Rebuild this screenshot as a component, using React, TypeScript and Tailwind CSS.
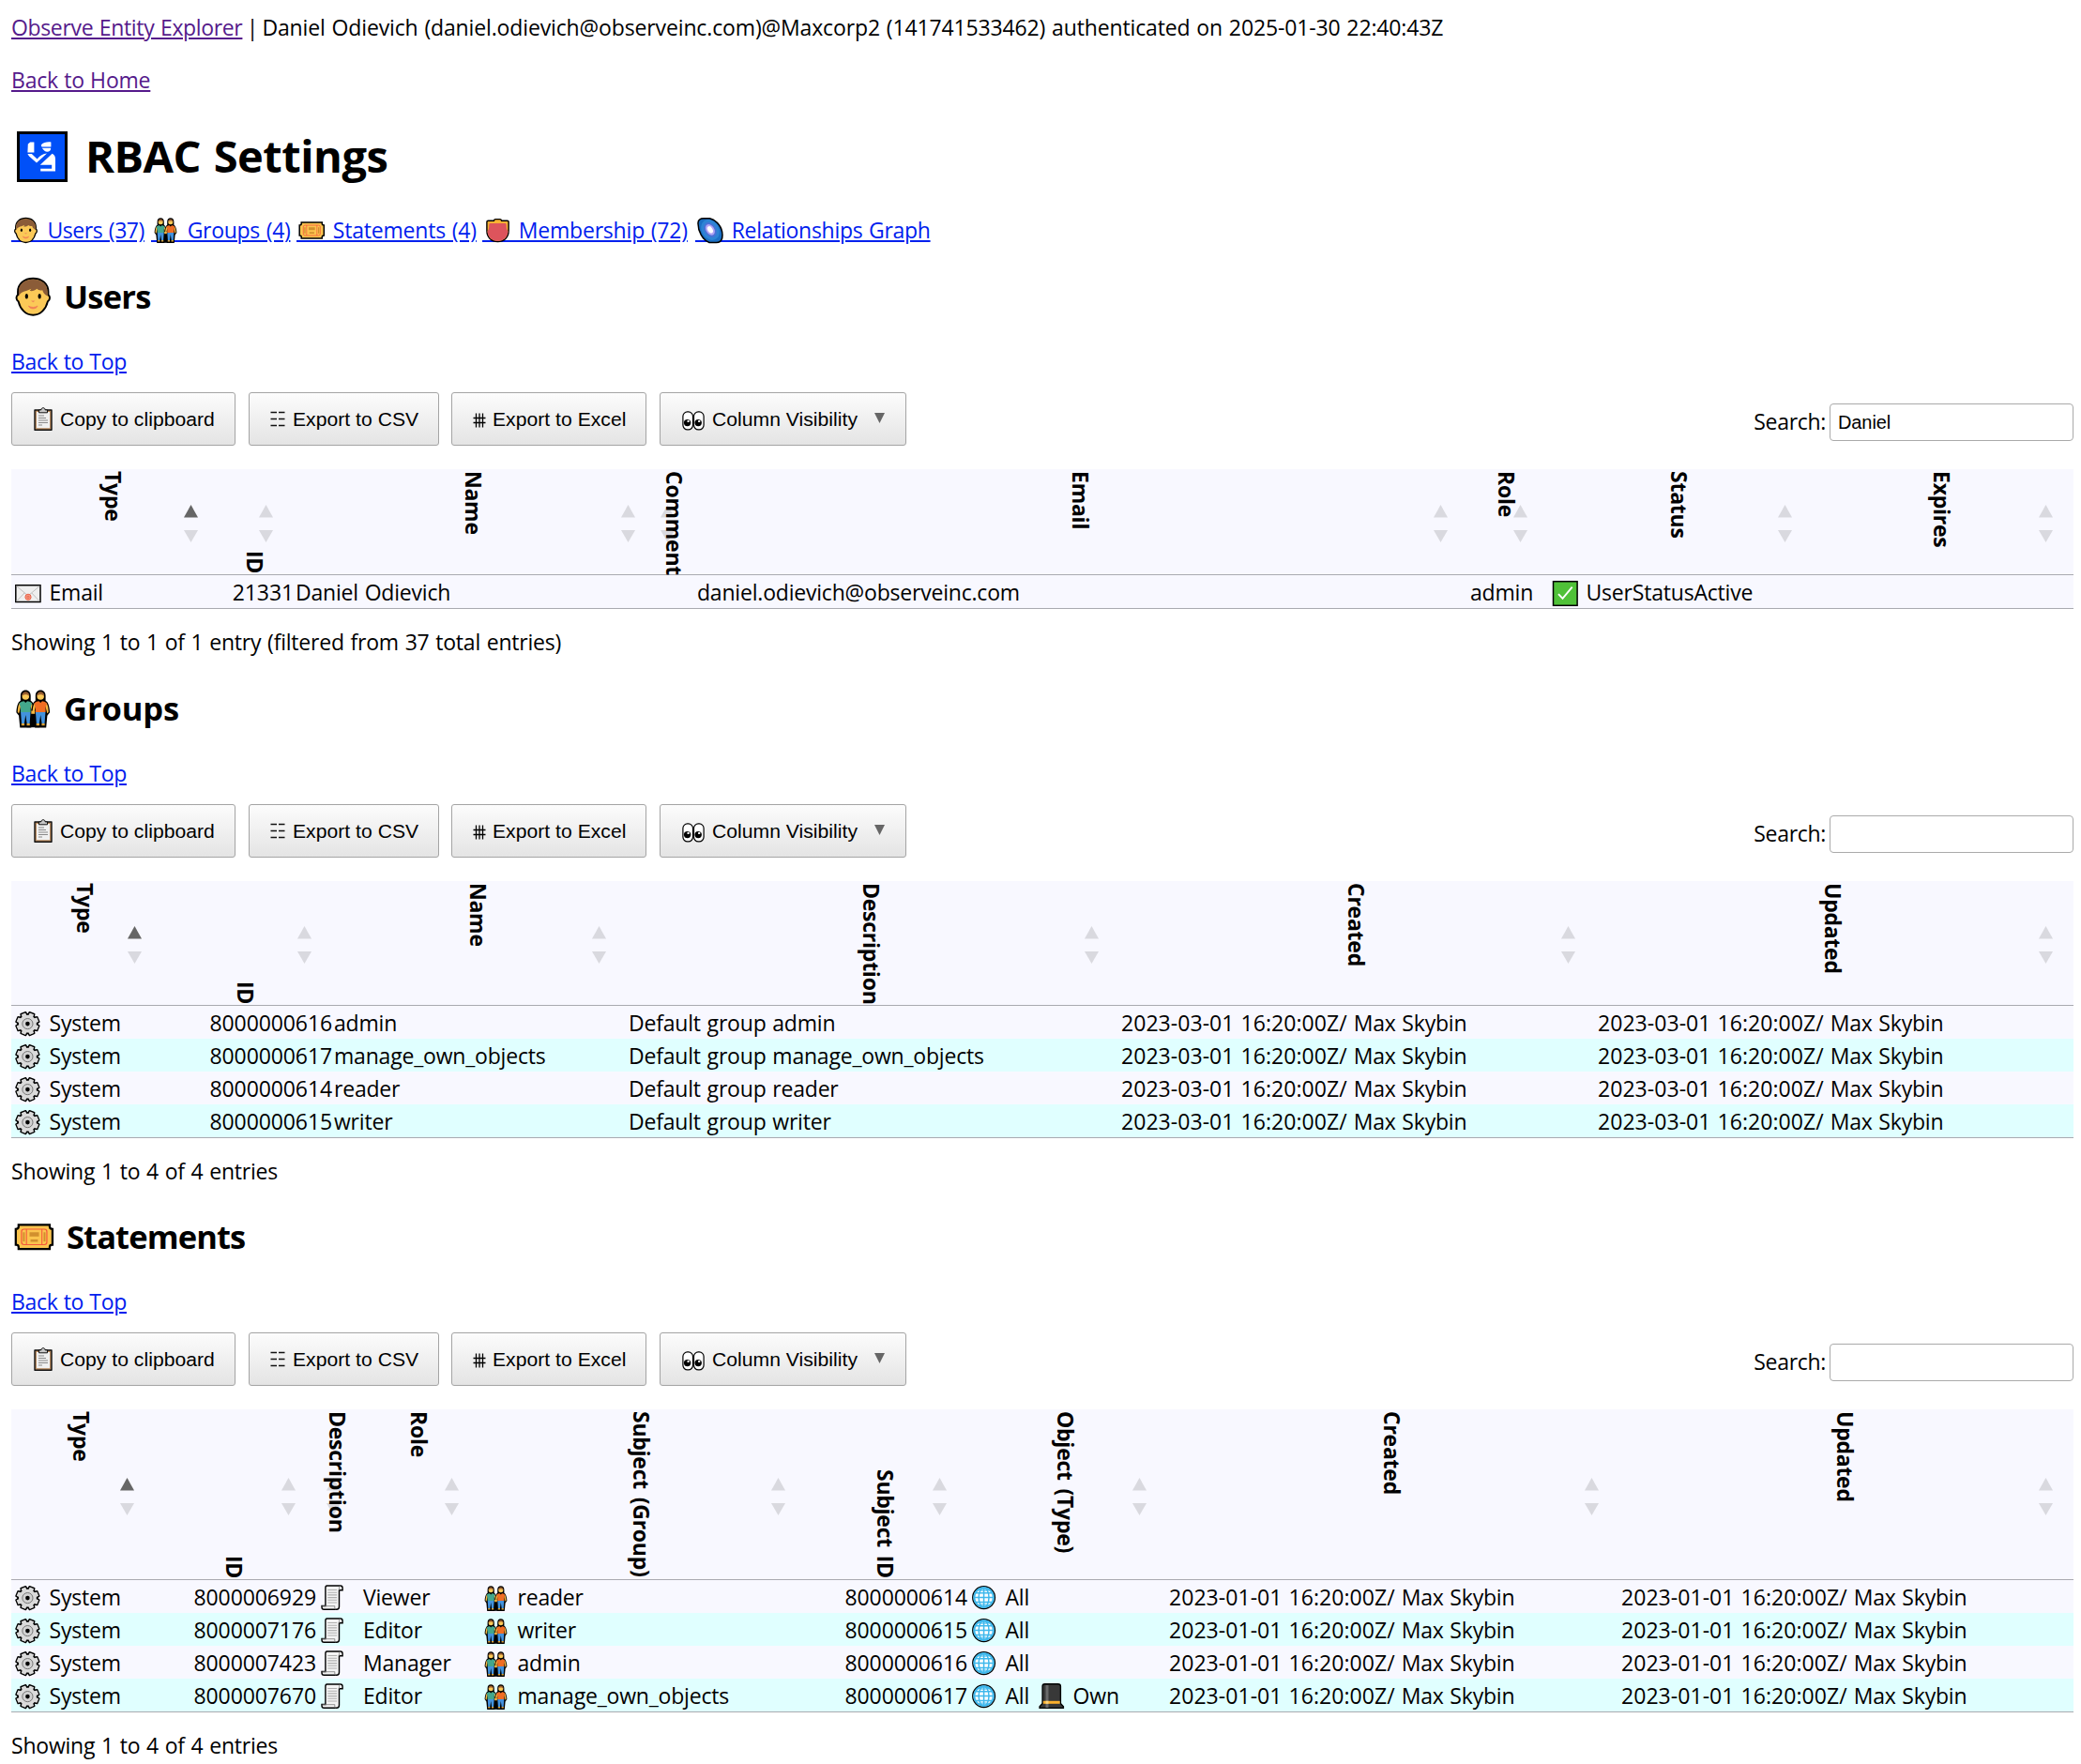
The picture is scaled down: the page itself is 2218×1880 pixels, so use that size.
import React from 'react';

type IconProps = { className?: string };

const CheckpointIcon = ({ className }: IconProps) => (
  <svg viewBox="0 0 32 32" className={className}>
    <rect x="3" y="4" width="27" height="27" fill="#000" />
    <rect x="4.5" y="5.5" width="24" height="24" fill="#0050f8" />
    <path d="M8.900 10.700l1.200-.9h2.100v5.400H8.700zM15.900 11.200c1-1.200 3.800-1.900 5.300-1.400v2.400h-5zM16.400 12.900h4.700c0 1.200-.7 2-2 2-1 0-1.700-.6-2.700-2z" fill="#fff" />
    <path d="M8.700 16h2.200l2.900 2.800c1.500-1.900 3.200-2.900 5.200-3l-5.500 5-4-3.500zM21.800 15.900c1.200.7 1.700 1.500 1.700 2.800v6.600h-7.900v-1.400h6v-2h-6.200z" fill="#fff" />
  </svg>
);

const PersonIcon = ({ className }: IconProps) => (
  <svg viewBox="0 0 32 32" className={className}>
    <path d="M15.5 4.5c6.500 0 10.800 4 10.800 9.500v2.200c1.300.5 1.600 3.600-.4 4.700-1.300 5.500-5.200 9.600-10.400 9.600S6.400 26.400 5.100 20.900c-2-1.100-1.700-4.200-.4-4.700V14c0-5.500 4.300-9.500 10.800-9.500z" fill="#fbc957" stroke="#000" strokeWidth="1.300" />
    <path d="M5.300 17v-3.200C5.300 8.600 9.400 5.200 15.500 5.200s10.200 3.400 10.200 8.600V17c-2-1-3.200-2.600-3.500-4.200-1.500.5-2.800.2-4-.9-1.400 1.300-3.100 1.800-5 1.500l1-1.600C11.500 13.500 7 13.300 5.300 17z" fill="#8b5c38" />
    <ellipse cx="10.900" cy="17.200" rx="1.100" ry="1.800" fill="#000" />
    <ellipse cx="20.100" cy="17.200" rx="1.100" ry="1.800" fill="#000" />
    <path d="M14 20.300h3l-1.500 1.200z" fill="#ee8a58" />
    <path d="M12.300 24c1.800 1.300 4.600 1.300 6.400 0-.7 2.600-5.700 2.600-6.400 0z" fill="#f07f55" stroke="#f07f55" strokeWidth=".5" />
  </svg>
);

const Figure = ({ x, shirt }: { x: number; shirt: string }) => (
  <g transform={`translate(${x} 0)`}>
    <path d="M0 4.300c-2.200 0-3.600 1.600-3.600 4v3.500c-1.800.9-2.800 4-3 8.300l1.800 2.400.8 8.500h8l.8-8.500 1.800-2.400c-.2-4.300-1.200-7.400-3-8.300V8.300c0-2.400-1.400-4-3.600-4z" fill="#000" />
    <path d="M-4.200 13.500c-1.100 1.500-1.400 4-1.500 6.500l1 .8 1.200-5zM4.200 13.500c1.100 1.500 1.400 4 1.500 6.500l-1 .8-1.200-5z" fill="#f5b740" />
    <circle cx="0" cy="8.700" r="2.500" fill="#fbc957" />
    <path d="M-2.600 8.800C-2.800 4.400 2.800 4.400 2.600 8.800c-1-1.700-4.200-1.700-5.200 0z" fill="#9a5f30" />
    <path d="M-4.500 13.600c1-1 2.500-1.300 3.300-1.400L0 13.400l1.200-1.200c.8.1 2.300.4 3.300 1.400l-.9 3V20h-7.200v-3.400z" fill={shirt} />
    <path d="M-3.500 20h7l-.6 8h-2L0 22l-.9 6h-2z" fill="#4292dd" />
    <path d="M-3 28h2.200v1.500H-3zM.8 28H3v1.500H.8z" fill="#dba33a" />
  </g>
);

const PeopleIcon = ({ className }: IconProps) => (
  <svg viewBox="0 0 32 32" className={className}>
    <path d="M11 18h9v12.800h-9z" fill="#000" />
    <Figure x={10.2} shirt="#43a78c" />
    <Figure x={20.8} shirt="#f06d23" />
    <path d="M14.200 19h2.600v2.200h-2.600z" fill="#f5b740" />
  </svg>
);

const TicketIcon = ({ className }: IconProps) => (
  <svg viewBox="0 0 32 32" className={className}>
    <path d="M5.200 8.900h22.100v1.500c0 .8.600 1.500 2 1.500v11.200c-1.400 0-2 .7-2 1.500v1.500H5.200v-1.500c0-.8-.6-1.500-2-1.500V11.900c1.400 0 2-.7 2-1.500z" fill="#fbc44e" stroke="#000" strokeWidth="1.500" />
    <rect x="7.300" y="12" width="18" height="11" rx="1.800" fill="none" stroke="#f4583c" strokeWidth=".8" />
    <path d="M10.800 12v11M21.800 12v11" stroke="#f4583c" strokeWidth=".7" />
    <rect x="8.300" y="14.200" width="1.300" height="6.600" fill="#d18f2e" />
    <rect x="23" y="14.200" width="1.300" height="6.600" fill="#d18f2e" />
    <rect x="13" y="14.200" width="6.700" height="3" fill="#d18f2e" />
    <rect x="13.700" y="19.300" width="5.200" height="1.700" fill="#d18f2e" />
  </svg>
);

const ShieldIcon = ({ className }: IconProps) => (
  <svg viewBox="0 0 32 32" className={className}>
    <path d="M6.200 7.300h6.200c.3-1.500 1-1.700 1.700-1.700h4.800c.7 0 1.400.2 1.700 1.700h6.200c.8 0 1.300.5 1.300 1.300v9.500c0 7-5.100 11.500-11.600 11.500S4.900 25.100 4.900 18.100V8.600c0-.8.500-1.300 1.300-1.300z" fill="#f9b233" stroke="#000" strokeWidth="1.400" />
    <path d="M5.500 18.500l1-1.400c.8-2 .8-4.200.8-5.400 0-1 .6-1.600 1.600-1.600h15.200c1 0 1.600.6 1.600 1.600 0 1.200 0 3.400.8 5.400l1 1.400c-.2 6.200-5 10.500-11 10.500S5.700 24.700 5.500 18.500z" fill="#dd545c" />
  </svg>
);

const GalaxyIcon = ({ className }: IconProps) => (
  <svg viewBox="0 0 32 32" className={className}>
    <path d="M3 9.500C3.200 6.500 5.500 4.700 9 4.700h6.500C23.500 7 29 14.500 29 22.500c0 5-2.500 8-6.500 8H15C8 28 2.700 18.500 3 9.500z" fill="#1b6fc4" stroke="#000" strokeWidth="1.500" />
    <ellipse cx="16" cy="17" rx="9" ry="11.500" transform="rotate(-32 16 17)" fill="#2e84d4" />
    <ellipse cx="16" cy="17" rx="6" ry="8.500" transform="rotate(-32 16 17)" fill="#4a72d6" />
    <ellipse cx="16" cy="16.800" rx="4.300" ry="6.400" transform="rotate(-32 16 17)" fill="#b2a4f4" />
    <ellipse cx="16" cy="16.800" rx="2.500" ry="4" transform="rotate(-32 16 17)" fill="#fff" />
  </svg>
);

const GlobeIcon = ({ className }: IconProps) => (
  <svg viewBox="0 0 32 32" className={className}>
    <circle cx="15.600" cy="16.600" r="11.800" fill="#fff" stroke="#000" strokeWidth="1.500" />
    <g fill="none" stroke="#3fb8ec" strokeWidth="1.500">
      <circle cx="15.600" cy="16.600" r="10.300" strokeWidth="2" />
      <ellipse cx="15.600" cy="16.600" rx="5.400" ry="10.500" />
      <path d="M15.600 6v21M5 16.600h21.200M7 11.800h17.200M7 21.400h17.200" />
    </g>
    <path d="M8.500 8.500c4-3.400 10.200-3.400 14.200 0-4 2-10.200 2-14.200 0zM8.500 24.700c4-2 10.200-2 14.200 0-4 3.400-10.200 3.400-14.200 0z" fill="#3fb8ec" fillOpacity=".6" />
  </svg>
);

const HatIcon = ({ className }: IconProps) => (
  <svg viewBox="0 0 32 32" className={className}>
    <path d="M8.500 3.700h14.200c1.500 0 2.700 1 2.700 2.600v18.200l3 3.200v1.700H3.100v-1.700l3-3.200V6.300c0-1.600 1-2.600 2.400-2.600z" fill="#383838" stroke="#000" strokeWidth="1.400" />
    <path d="M9.500 5h3v24h-3z" fill="#6a6a6a" />
    <path d="M6.800 21.800h17.900v3H6.800z" fill="#fbb02d" />
    <path d="M9.500 21.800h3v3h-3z" fill="#fdd27a" />
  </svg>
);

const MailIcon = ({ className }: IconProps) => (
  <svg viewBox="0 0 32 32" className={className}>
    <rect x="2.800" y="8.700" width="26.200" height="17.800" fill="#efefef" stroke="#000" strokeWidth="1.500" />
    <path d="M3.500 9.500L16 20 28.300 9.500M3.500 26l8.500-9M28.300 26l-8.500-9" fill="none" stroke="#b9b9b9" strokeWidth=".9" />
    <circle cx="16" cy="21.300" r="3.100" fill="#f6a08c" stroke="#e8573a" strokeWidth=".9" />
    <circle cx="16" cy="21.300" r="1.200" fill="none" stroke="#e8573a" strokeWidth=".8" />
  </svg>
);

const CheckIcon = ({ className }: IconProps) => (
  <svg viewBox="0 0 32 32" className={className}>
    <rect x="3.500" y="4.700" width="25.600" height="25.600" fill="#4fc138" stroke="#000" strokeWidth="1.500" />
    <path d="M9 18.200l4.500 4.700L23.700 10.700" fill="none" stroke="#fff" strokeWidth="1.900" />
  </svg>
);

const ScrollIcon = ({ className }: IconProps) => (
  <svg viewBox="0 0 32 32" className={className}>
    <path d="M9.500 4h14.300c1.600 0 2.300 1 2.300 2.500v2.300h-3.600v17.400c0 2-1 3.100-2.700 3.100H6.300c-1.500 0-2.300-.9-2.300-2.200v-1.600h3.900V6.200C7.900 4.900 8.400 4 9.500 4z" fill="#f3f3f3" stroke="#000" strokeWidth="1.400" />
    <path d="M22.500 9V6.300c0-1.200.5-2 1.500-2M4.500 25.700h13.300v2.400c0 .6.600 1 1.300 1" fill="none" stroke="#777" strokeWidth=".8" />
    <path d="M10.300 8.500h9.800M10.300 11.200h9.800M10.300 13.900h9.800M10.300 16.600h9.800M10.300 19.300h9.800M10.300 22h9.800" stroke="#b0b0b0" strokeWidth="1.100" />
  </svg>
);

const teeth = [0, 45, 90, 135, 180, 225, 270, 315];

const GearIcon = ({ className }: IconProps) => (
  <svg viewBox="0 0 32 32" className={className}>
    <g transform="translate(15.400 17.100)">
      {teeth.map((a) => (
        <path key={a} transform={`rotate(${a + 22.5})`} d="M-3.300-9l.5-3.200h5.600l.5 3.200z" fill="#d6d6d6" stroke="#000" strokeWidth="1.700" strokeLinejoin="round" />
      ))}
      <circle r="10.300" fill="#dadada" stroke="#000" strokeWidth="1.700" />
      {teeth.map((a) => (
        <path key={a} transform={`rotate(${a + 22.5})`} d="M-2.700-8l.4-3.700h4.600l.4 3.700z" fill="#dadada" />
      ))}
      <circle r="5.600" fill="#d2d2d2" stroke="#777" strokeWidth="1" />
      <circle r="2.300" fill="#000" />
    </g>
  </svg>
);

const ClipboardIcon = () => (
  <svg viewBox="0 0 20 25" className="h-[25px] w-5 shrink-0">
    <path d="M1 3h18v21.200H1z" fill="#b98d63" stroke="#111" strokeWidth="1.400" strokeLinejoin="round" />
    <path d="M3 5h14v17.200H3z" fill="#f0f0f0" />
    <path d="M5.500 5.800V2.900h2.300C8 1.200 9 .7 10 .7s2 .5 2.200 2.200h2.300v2.900z" fill="#c9c9c9" stroke="#111" strokeWidth="1" />
    <path d="M5 9h6M5 11.500h8M5 14h10M5 16.500h10M5 19h4" stroke="#8a8a8a" strokeWidth="1" />
  </svg>
);

const TrigramIcon = () => (
  <svg viewBox="0 0 16 17" className="h-[17px] w-4 shrink-0">
    <path d="M.5 1.500H7M9 1.500h6.500M.5 8.500H7M9 8.500h6.500M.5 15.500H7M9 15.500h6.500" stroke="#111" strokeWidth="1.500" />
  </svg>
);

const GridHashIcon = () => (
  <svg viewBox="0 0 14 16" className="mt-[3px] h-4 w-3.5 shrink-0">
    <path d="M3.500.5v15M7 .5v15M10.500.5v15M.5 5.500h13M.5 10.500h13" stroke="#000" strokeWidth="1.300" />
  </svg>
);

const EyesIcon = () => (
  <svg viewBox="0 0 24 21" className="mt-[3px] h-[21px] w-6 shrink-0">
    <rect x=".9" y=".9" width="10.600" height="19" rx="4.800" fill="#fff" stroke="#000" strokeWidth="1.200" />
    <rect x="12.500" y=".9" width="10.600" height="19" rx="4.800" fill="#fff" stroke="#000" strokeWidth="1.200" />
    <circle cx="5.600" cy="12.600" r="3.700" fill="#000" />
    <circle cx="17.200" cy="12.600" r="3.700" fill="#000" />
    <circle cx="6.600" cy="10.900" r="1.200" fill="#fff" />
    <circle cx="18.200" cy="10.900" r="1.200" fill="#fff" />
  </svg>
);

type Icon = (p: IconProps) => React.ReactElement;

const NavLink = ({ icon: I, label, width }: { icon: Icon; label: string; width: string }) => (
  <div className={`${width} flex shrink-0 whitespace-pre`}>
    <span className="relative block h-[30px] w-8 border-b-2 border-[#0020ee]">
      <I className="absolute top-0 left-0 size-8" />
    </span>
    <a href="#top" className="text-[#0020ee] underline decoration-2 underline-offset-[2px]">{'\u00a0' + label}</a>
  </div>
);

const BUTTON =
  'flex h-[57px] items-center rounded-[3px] border border-[#a4a4a4] bg-linear-to-b from-[#fcfcfc] to-[#e4e4e4] font-["Liberation_Sans",Arial,sans-serif] text-[21.12px] tracking-[0.03px] [word-spacing:0px] whitespace-nowrap';

const Toolbar = ({ search }: { search?: string }) => (
  <div className="mt-[18px] flex h-[57px] justify-between">
    <div className="flex">
      <button className={`${BUTTON} mr-3.5 w-[239px] pl-[23px]`}>
        <ClipboardIcon />
        <span className="ml-2">Copy to clipboard</span>
      </button>
      <button className={`${BUTTON} mr-[13px] w-[203px] pl-[22px]`}>
        <TrigramIcon />
        <span className="ml-2">Export to CSV</span>
      </button>
      <button className={`${BUTTON} mr-3.5 w-[208px] pl-[22px]`}>
        <GridHashIcon />
        <span className="ml-[7px]">Export to Excel</span>
      </button>
      <button className={`${BUTTON} w-[263px] pl-[23px]`}>
        <EyesIcon />
        <span className="ml-2">Column Visibility</span>
        <svg viewBox="0 0 11 11" className="mb-[3px] ml-[18px] size-[11px]">
          <path d="M0 0h11L5.500 11z" fill="#666" />
        </svg>
      </button>
    </div>
    <label className="mt-3 flex h-10 items-center">
      <span className="mr-1 h-10 leading-[38px] tracking-[-0.3px]">Search:</span>
      <input
        defaultValue={search}
        className="h-10 w-[260px] rounded-[4px] border border-[#aaa] bg-white px-2 font-['Liberation_Sans',Arial,sans-serif] text-[20px] tracking-[-0.1px]"
      />
    </label>
  </div>
);

type Column = { label: string; width: string; end?: boolean; sorted?: boolean };

const DataTable = ({ columns, rows, headHeight }: { columns: Column[]; rows: React.ReactNode[][]; headHeight: string }) => (
  <table className="mt-[25px] w-[2198px] table-fixed border-separate border-spacing-0 border-b border-[#a9aab0]">
    <colgroup>
      {columns.map((c) => (
        <col key={c.label} className={c.width} />
      ))}
    </colgroup>
    <thead>
      <tr className="bg-[#f8f8ff]">
        {columns.map((c) => (
          <th key={c.label} className="border-b border-[#a9aab0] p-0">
            <div className={`${headHeight} relative flex justify-center pr-[3px]`}>
              <svg viewBox="0 0 15 40" className="absolute right-[22px] bottom-1/2 h-10 w-[15px] translate-y-[22px]">
                <path d="M7.500 0L15 13.500H0z" fill={c.sorted ? '#666' : '#d9d9df'} />
                <path d="M0 27h15L7.500 40z" fill="#d9d9df" />
              </svg>
              <span
                className={`${c.end ? 'text-right' : 'text-left'} relative h-full pt-[2px] pb-px text-[23px] leading-8 font-bold tracking-[-0.25px] [word-spacing:3px] whitespace-nowrap [writing-mode:vertical-rl]`}
              >
                {c.label}
              </span>
            </div>
          </th>
        ))}
      </tr>
    </thead>
    <tbody>
      {rows.map((row, r) => (
        <tr key={r} className="bg-[#f8f8ff] even:bg-[#e0ffff]">
          {row.map((cell, i) => (
            <td key={i} className="p-0">
              <div
                className={`${columns[i].end ? 'justify-end pl-0.5 tracking-[-0.1px]' : 'px-0.5'} flex h-[35px] leading-[37px] whitespace-nowrap`}
              >
                {cell}
              </div>
            </td>
          ))}
        </tr>
      ))}
    </tbody>
  </table>
);

const Tag = ({ icon: I, children }: { icon: Icon; children?: React.ReactNode }) => (
  <span className="flex">
    <I className="mt-0.5 mr-[6.5px] size-8 shrink-0" />
    {children}
  </span>
);

const Stamp = ({ date, by }: { date: string; by: string }) => (
  <span className="whitespace-pre">
    <span className="tracking-[0.05px]">{date}/ </span>
    {by}
  </span>
);

const Section = ({
  icon: I,
  title,
  titleStyle,
  margin = 'mt-[30px]',
  search,
  info,
  children,
}: {
  icon: Icon;
  title: string;
  titleStyle: string;
  margin?: string;
  search?: string;
  info: string;
  children: React.ReactNode;
}) => (
  <section className={margin}>
    <h2 className={`${titleStyle} flex h-12 text-[34.5px] leading-[52px] font-bold`}>
      <I className="size-12" />
      {title}
    </h2>
    <p className="mt-[30px] h-8">
      <a href="#top" className="text-[#0020ee] underline decoration-2 underline-offset-[2px] tracking-[-0.3px] [word-spacing:0.5px]">Back to Top</a>
    </p>
    <Toolbar search={search} />
    {children}
    <p className="mt-[18px] h-8 tracking-[-0.22px]">{info}</p>
  </section>
);

const userColumns: Column[] = [
  { label: 'Type', width: 'w-[221px]', sorted: true },
  { label: 'ID', width: 'w-[80px]', end: true },
  { label: 'Name', width: 'w-[386px]' },
  { label: 'Comment', width: 'w-[42px]' },
  { label: 'Email', width: 'w-[824px]' },
  { label: 'Role', width: 'w-[85px]' },
  { label: 'Status', width: 'w-[282px]' },
  { label: 'Expires', width: 'w-[278px]' },
];

const groupColumns: Column[] = [
  { label: 'Type', width: 'w-[161px]', sorted: true },
  { label: 'ID', width: 'w-[181px]', end: true },
  { label: 'Name', width: 'w-[314px]' },
  { label: 'Description', width: 'w-[525px]' },
  { label: 'Created', width: 'w-[508px]' },
  { label: 'Updated', width: 'w-[509px]' },
];

const statementColumns: Column[] = [
  { label: 'Type', width: 'w-[153px]', sorted: true },
  { label: 'ID', width: 'w-[172px]', end: true },
  { label: 'Description', width: 'w-[48px]' },
  { label: 'Role', width: 'w-[126px]' },
  { label: 'Subject (Group)', width: 'w-[348px]' },
  { label: 'Subject ID', width: 'w-[172px]', end: true },
  { label: 'Object (Type)', width: 'w-[213px]' },
  { label: 'Created', width: 'w-[482px]' },
  { label: 'Updated', width: 'w-[484px]' },
];

const groups = [
  ['8000000616', 'admin'],
  ['8000000617', 'manage_own_objects'],
  ['8000000614', 'reader'],
  ['8000000615', 'writer'],
];

const statements = [
  ['8000006929', 'Viewer', 'reader', '8000000614'],
  ['8000007176', 'Editor', 'writer', '8000000615'],
  ['8000007423', 'Manager', 'admin', '8000000616'],
  ['8000007670', 'Editor', 'manage_own_objects', '8000000617'],
];

export default function App() {
  return (
    <div
      id="top"
      className="h-[1880px] w-[2218px] overflow-hidden bg-white pt-3 pl-3 font-['Open_Sans','Noto_Sans',sans-serif] text-[23px] leading-[34px] tracking-[-0.2px] [word-spacing:1px] text-black"
    >
      <div className="w-[2198px]">
        <p className="h-8 whitespace-pre">
          <a href="#top" className="tracking-[-0.35px] text-[#551a8b] underline decoration-2 underline-offset-[2px]">Observe Entity Explorer</a>
          <span className="-mx-[2.5px]">{' | '}</span>
          <span className="tracking-[-0.135px]">
            Daniel Odievich (daniel.odievich@observeinc.com)@Maxcorp2 (141741533462) authenticated on 2025-01-30 22:40:43Z
          </span>
        </p>
        <p className="mt-6 h-8">
          <a href="#top" className="text-[#551a8b] underline decoration-2 underline-offset-[2px] [word-spacing:0.5px]">Back to Home</a>
        </p>
        <h1 className="mt-8 flex h-16 text-[47px] leading-[68px] font-bold tracking-[-0.5px] [word-spacing:2px]">
          <CheckpointIcon className="mr-[15px] size-16" />
          RBAC Settings
        </h1>
        <nav className="mt-8 flex h-8">
          <NavLink icon={PersonIcon} label="Users (37)" width="w-[149px] tracking-[-0.45px]" />
          <NavLink icon={PeopleIcon} label="Groups (4)" width="w-[155px] tracking-[-0.3px]" />
          <NavLink icon={TicketIcon} label="Statements (4)" width="w-[198px]" />
          <NavLink icon={ShieldIcon} label="Membership (72)" width="w-[227px]" />
          <NavLink icon={GalaxyIcon} label="Relationships Graph" width="w-[260px] tracking-[-0.3px]" />
        </nav>

        <Section
          icon={PersonIcon}
          title="Users"
          titleStyle="gap-2 tracking-[-0.75px]"
          search="Daniel"
          info="Showing 1 to 1 of 1 entry (filtered from 37 total entries)"
        >
          <DataTable
            columns={userColumns}
            headHeight="h-[112px]"
            rows={[
              [
                <Tag icon={MailIcon}>Email</Tag>,
                '21331',
                'Daniel Odievich',
                '',
                'daniel.odievich@observeinc.com',
                'admin',
                <Tag icon={CheckIcon}>UserStatusActive</Tag>,
                '',
              ],
            ]}
          />
        </Section>

        <Section icon={PeopleIcon} title="Groups" titleStyle="gap-2 tracking-[-0.1px]" info="Showing 1 to 4 of 4 entries">
          <DataTable
            columns={groupColumns}
            headHeight="h-[132px]"
            rows={groups.map(([id, name]) => [
              <Tag icon={GearIcon}>System</Tag>,
              id,
              name,
              `Default group ${name}`,
              <Stamp date="2023-03-01 16:20:00Z" by="Max Skybin" />,
              <Stamp date="2023-03-01 16:20:00Z" by="Max Skybin" />,
            ])}
          />
        </Section>

        <Section
          icon={TicketIcon}
          title="Statements"
          titleStyle="gap-[11px] tracking-[-0.9px]"
          margin="mt-[29px]"
          info="Showing 1 to 4 of 4 entries"
        >
          <DataTable
            columns={statementColumns}
            headHeight="h-[181px]"
            rows={statements.map(([id, role, subject, subjectId]) => [
              <Tag icon={GearIcon}>System</Tag>,
              id,
              <Tag icon={ScrollIcon} />,
              role,
              <Tag icon={PeopleIcon}>{subject}</Tag>,
              subjectId,
              <>
                <Tag icon={GlobeIcon}>All</Tag>
                {subject === 'manage_own_objects' && (
                  <span className="ml-2">
                    <Tag icon={HatIcon}>Own</Tag>
                  </span>
                )}
              </>,
              <Stamp date="2023-01-01 16:20:00Z" by="Max Skybin" />,
              <Stamp date="2023-01-01 16:20:00Z" by="Max Skybin" />,
            ])}
          />
        </Section>
      </div>
    </div>
  );
}
